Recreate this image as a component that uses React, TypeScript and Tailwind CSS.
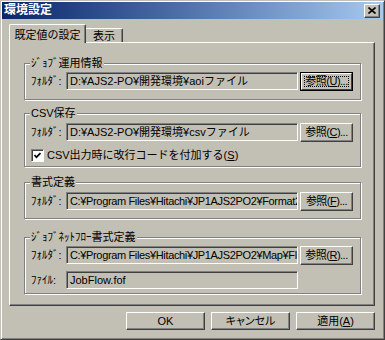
import React from "react";

const raised =
  "border border-t-white border-l-white border-r-[#404040] border-b-[#404040] shadow-[inset_-1px_-1px_0_#808080]";
const sunken =
  "border border-t-[#808080] border-l-[#808080] border-r-white border-b-white shadow-[inset_1px_1px_0_#404040]";
const etched = "border border-[#808080] shadow-[inset_1px_1px_0_#fff,1px_1px_0_#fff]";

const Group = ({
  title,
  className,
  children,
}: {
  title: string;
  className: string;
  children: React.ReactNode;
}) => (
  <div className={`relative w-[337px] pl-[6px] ${etched} ${className}`}>
    <span className="absolute -top-[7px] left-[5px] px-[1px] bg-[#c2bfb4] leading-[13px] whitespace-nowrap">
      {title}
    </span>
    {children}
  </div>
);

const TextBox = ({ text, tight }: { text: string; tight?: boolean }) => (
  <div
    className={`${sunken} w-[232px] h-[18px] pl-[3px] flex items-center overflow-hidden whitespace-nowrap ${
      tight ? "tracking-[-0.35px]" : ""
    }`}
  >
    {text}
  </div>
);

const RefButton = ({ k, main }: { k: string; main?: boolean }) =>
  main ? (
    <div className="ml-[2px] w-[53px] h-[19px] border border-black">
      <div className="relative h-full flex items-center justify-center border border-t-white border-l-white border-r-[#404040] border-b-[#404040]">
        <div className="absolute inset-[2px] border border-dotted border-black" />
        <span className="tracking-[-0.5px]">
          参照(<span className="underline">{k}</span>)...
        </span>
      </div>
    </div>
  ) : (
    <div className={`ml-[2px] w-[53px] h-[19px] ${raised} flex items-center justify-center`}>
      <span className="tracking-[-0.5px]">
        参照(<span className="underline">{k}</span>)...
      </span>
    </div>
  );

const Row = ({
  label,
  text,
  k,
  main,
  tight,
}: {
  label: string;
  text: string;
  k?: string;
  main?: boolean;
  tight?: boolean;
}) => (
  <div className="flex items-start">
    <span className="w-[35px] h-[18px] flex items-center whitespace-nowrap">{label}</span>
    <TextBox text={text} tight={tight} />
    {k && <RefButton k={k} main={main} />}
  </div>
);

export default function App() {
  return (
    <div className="w-[385px] h-[340px] overflow-hidden bg-[#c2bfb4] border border-t-[#c2bfb4] border-l-[#c2bfb4] border-r-[#404040] border-b-[#404040] shadow-[inset_1px_1px_0_#fff,inset_-1px_-1px_0_#808080] px-[1px] pt-[1px] font-['Liberation_Sans','Noto_Sans_CJK_JP',sans-serif] text-[11px] leading-[13px] text-black">
      {/* title bar */}
      <div className="h-[17px] flex items-center justify-between bg-gradient-to-r from-[#0a246a] to-[#a6caf0] pl-[2px] pr-[3px]">
        <span className="text-white font-bold text-[12px]">環境設定</span>
        <div className={`w-[16px] h-[14px] bg-[#c2bfb4] ${raised} flex items-center justify-center`}>
          <svg width="8" height="7" viewBox="0 0 8 7">
            <path d="M0.5 0.5 L7.5 6.5 M7.5 0.5 L0.5 6.5" stroke="#000" strokeWidth="1.6" />
          </svg>
        </div>
      </div>

      <div className="ml-[7px] w-[366px]">
        {/* tabs */}
        <div className="mt-[5px] h-[18px] flex items-end">
          <div className="relative z-10 -mb-[1px] w-[77px] h-[19px] pt-[2px] bg-[#c2bfb4] border-t border-l border-r border-t-white border-l-white border-r-[#404040] rounded-t-[2px] shadow-[inset_-1px_0_0_#808080] flex items-center justify-center">
            既定値の設定
          </div>
          <div className="w-[37px] h-[14px] pt-[1px] border-t border-r border-t-white border-r-[#404040] rounded-tr-[2px] shadow-[inset_-1px_0_0_#808080] flex items-center justify-center">
            表示
          </div>
        </div>

        {/* panel */}
        <div className="border border-t-white border-l-white border-r-[#404040] border-b-[#404040] shadow-[inset_-1px_-1px_0_#808080] pt-[20px] pb-[11px] pl-[14px]">
          <Group title="ｼﾞｮﾌﾞ運用情報" className="pt-[8px] pb-[8px]">
            <Row label="ﾌｫﾙﾀﾞ:" text="D:¥AJS2-PO¥開発環境¥aoiファイル" k="U" main />
          </Group>

          <Group title="CSV保存" className="mt-[13px] pt-[9px] pb-[4px]">
            <Row label="ﾌｫﾙﾀﾞ:" text="D:¥AJS2-PO¥開発環境¥csvファイル" k="C" />
            <div className="mt-[7px] flex items-center gap-[3px]">
              <div className={`w-[13px] h-[13px] bg-white ${sunken} flex items-center justify-center`}>
                <svg width="7" height="7" viewBox="0 0 7 7">
                  <polyline points="0.5,3 2.5,5.2 6.5,1" fill="none" stroke="#000" strokeWidth="1.7" />
                </svg>
              </div>
              <span>
                CSV出力時に改行コードを付加する(<span className="underline">S</span>)
              </span>
            </div>
          </Group>

          <Group title="書式定義" className="mt-[15px] pt-[9px] pb-[7px]">
            <Row label="ﾌｫﾙﾀﾞ:" text="C:¥Program Files¥Hitachi¥JP1AJS2PO2¥Format2¥" k="F" tight />
          </Group>

          <Group title="ｼﾞｮﾌﾞﾈｯﾄﾌﾛｰ書式定義" className="mt-[18px] pt-[8px] pb-[4px]">
            <Row label="ﾌｫﾙﾀﾞ:" text="C:¥Program Files¥Hitachi¥JP1AJS2PO2¥Map¥FlowFormat" k="R" tight />
            <div className="mt-[6px]">
              <Row label="ﾌｧｲﾙ:" text="JobFlow.fof" />
            </div>
          </Group>
        </div>

        {/* dialog buttons */}
        <div className="mt-[6px] flex justify-end gap-[6px]">
          <div className={`w-[79px] h-[18px] ${raised} flex items-center justify-center`}>OK</div>
          <div className={`w-[79px] h-[18px] ${raised} flex items-center justify-center [font-feature-settings:'palt']`}>
            キャンセル
          </div>
          <div className={`w-[79px] h-[18px] ${raised} flex items-center justify-center`}>
            <span>
              適用(<span className="underline">A</span>)
            </span>
          </div>
        </div>
      </div>
    </div>
  );
}
